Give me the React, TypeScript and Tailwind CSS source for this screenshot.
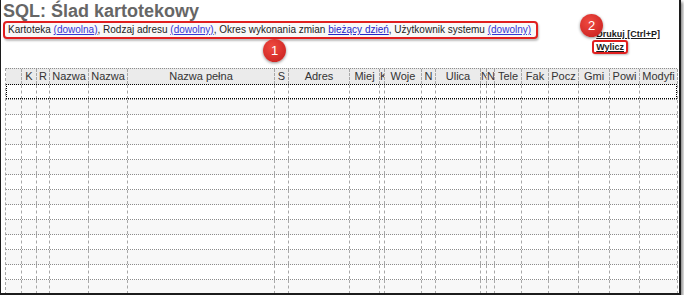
import React from "react";

const cols: { label: string; w: number; m?: string }[] = [
  { label: "", w: 16 },
  { label: "K", w: 15 },
  { label: "R", w: 13, m: "mx-[1px]" },
  { label: "Nazwa", w: 39, m: "mx-[1px]" },
  { label: "Nazwa", w: 39, m: "mx-[1px]" },
  { label: "Nazwa pełna", w: 147 },
  { label: "S", w: 14 },
  { label: "Adres", w: 61 },
  { label: "Miej", w: 30 },
  { label: "K", w: 5, m: "mx-0" },
  { label: "Woje", w: 37 },
  { label: "N", w: 14 },
  { label: "Ulica", w: 45 },
  { label: "N", w: 6, m: "mx-0" },
  { label: "N", w: 8, m: "mx-0" },
  { label: "Tele", w: 27 },
  { label: "Fak", w: 27 },
  { label: "Pocz", w: 30 },
  { label: "Gmi", w: 31 },
  { label: "Powi", w: 30 },
  { label: "Modyfi", w: 38 },
];

const rows = Array.from({ length: 14 }, (_, i) => i);

function Badge({ n, className }: { n: string; className: string }) {
  return (
    <div
      className={`absolute w-[23px] h-[23px] rounded-full flex items-center justify-center text-white text-[13px] leading-none bg-[radial-gradient(circle_at_40%_35%,#f04a40,#c41c1c)] shadow-[0_1px_3px_rgba(0,0,0,0.45)] ${className}`}
    >
      {n}
    </div>
  );
}

export default function App() {
  return (
    <div className="w-[684px] h-[295px] bg-white overflow-hidden font-['Liberation_Sans',Arial,sans-serif]">
      <div className="relative w-[681px] h-[295px] bg-white border-l border-r-2 border-b-2 border-[#1c1c1c] shadow-[2px_2px_3px_rgba(0,0,0,0.45)] flex flex-col overflow-hidden">
        <h1 className="text-[18px] leading-[19px] font-bold text-[#666666] pl-[2px] pt-[2px]">
          SQL: Ślad kartotekowy
        </h1>
        <div className="flex items-start justify-between">
          <div className="ml-[2px] border-2 border-[#e01f1f] rounded-[4px] bg-[#f8f8f8] pl-[3px] pr-[5px] text-[10px] leading-[14px] text-[#222] whitespace-nowrap shadow-[1px_2px_2px_rgba(0,0,0,0.25)]">
            Kartoteka <span className="text-[#3535d6] underline">(dowolna)</span>, Rodzaj adresu{" "}
            <span className="text-[#3535d6] underline">(dowolny)</span>, Okres wykonania zmian{" "}
            <span className="text-[#2424c8] underline">bieżący dzień</span>, Użytkownik systemu{" "}
            <span className="text-[#3535d6] underline">(dowolny)</span>
          </div>
          <div className="flex flex-col items-start pt-[7px] pr-[19px] text-[9px] font-bold text-[#1a1a1a]">
            <span className="pl-[4px] leading-[12px] underline whitespace-nowrap">Drukuj [Ctrl+P]</span>
            <span className="border-2 border-[#e01f1f] rounded-[3px] px-[2px] leading-[10px] underline shadow-[1px_1px_2px_rgba(0,0,0,0.25)]">
              Wylicz
            </span>
          </div>
        </div>
        <div className="mt-[14px] ml-[4px] w-[672px] border-l border-dashed border-[#a8a8a8]">
          <div className="flex h-[17px] bg-[#ebebeb] border-t border-b border-dotted border-[#8c8c8c] text-[11px] leading-[15px] text-[#333]">
            {cols.map((c, i) => (
              <div
                key={i}
                style={{ width: c.w }}
                className="shrink-0 border-r border-dashed border-[#a8a8a8] overflow-hidden"
              >
                <div className={`${c.m ?? "mx-[2px]"} overflow-hidden whitespace-nowrap text-center`}>
                  {c.label}
                </div>
              </div>
            ))}
          </div>
          {rows.map((r) => (
            <div
              key={r}
              className={`relative flex h-[15px] border-b border-dotted border-[#8c8c8c] ${
                r % 2 === 1 ? "bg-[#f8f8f8]" : "bg-white"
              }`}
            >
              {cols.map((c, i) => (
                <div
                  key={i}
                  style={{ width: c.w }}
                  className="shrink-0 border-r border-dashed border-[#a8a8a8]"
                />
              ))}
              {r === 0 && (
                <div className="absolute left-0 right-0 top-[-1px] bottom-0 border border-dotted border-black" />
              )}
            </div>
          ))}
        </div>
        <Badge n="1" className="left-[262px] top-[39px]" />
        <Badge n="2" className="left-[579px] top-[14px]" />
      </div>
    </div>
  );
}
